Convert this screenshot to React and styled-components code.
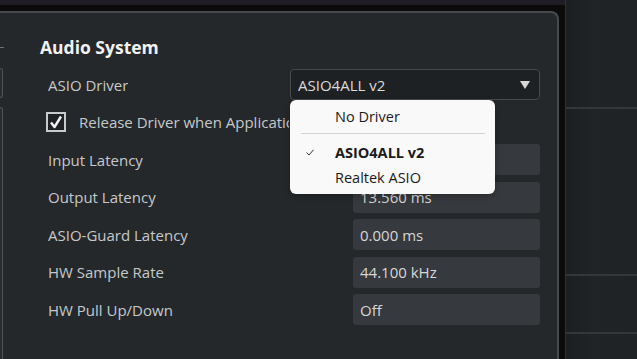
import React from 'react';
import styled, { createGlobalStyle } from 'styled-components';

const Global = createGlobalStyle`
  html, body { margin: 0; padding: 0; background: #0b0b0c; }
  body { width: 637px; height: 359px; overflow: hidden; font-family: "Open Sans", "Noto Sans", sans-serif; }
  * { box-sizing: border-box; }
`;

const Screen = styled.div`
  display: flex;
  width: 637px;
  height: 359px;
  overflow: hidden;
  background: #0b0b0c;
`;

const MainColumn = styled.div`
  width: 565px;
  flex: none;
  display: flex;
  flex-direction: column;
`;

const TitleStrip = styled.div`
  height: 5px;
  flex: none;
  background: #201c25;
`;

const Spacer = styled.div`
  height: 6px;
  flex: none;
`;

const Panel = styled.div`
  flex: 1;
  min-height: 0;
  margin-right: 6px;
  display: flex;
  background: #25282b;
  border-top: 2px solid #46494d;
  border-right: 2px solid #46494d;
  border-top-right-radius: 8px;
`;

const LeftStub = styled.div`
  width: 4px;
  flex: none;
  display: flex;
  flex-direction: column;
`;

const StubDash = styled.div`
  margin-top: 34px;
  height: 1px;
  width: 4px;
  background: #6e7174;
`;

const StubBox = styled.div`
  width: 3px;
  margin-top: ${p => p.$top}px;
  height: ${p => (p.$grow ? 'auto' : `${p.$h}px`)};
  flex: ${p => (p.$grow ? 1 : 'none')};
  background: #292c2f;
  border: 1px solid #505357;
  border-left: none;
  border-bottom: ${p => (p.$grow ? 'none' : '1px solid #505357')};
  border-radius: ${p => (p.$grow ? '0 3px 0 0' : '0 3px 3px 0')};
`;

const Content = styled.div`
  flex: 1;
  padding: 24px 0 0 36px;
`;

const Heading = styled.h2`
  margin: 0 0 12px;
  font-size: 17.5px;
  line-height: 20px;
  font-weight: 700;
  color: #f1f1f1;
`;

const Rows = styled.div`
  width: 492px;
  margin-left: 8px;
  display: flex;
  flex-direction: column;
  gap: 6.5px;
`;

const Row = styled.div`
  height: 31px;
  display: flex;
  align-items: center;
  justify-content: ${p => (p.$start ? 'flex-start' : 'space-between')};
`;

const Label = styled.span`
  font-size: 15px;
  color: #c6c8ca;
  white-space: nowrap;
  overflow: hidden;
  max-width: ${p => (p.$clip ? `${p.$clip}px` : 'none')};
`;

const ValueField = styled.div`
  width: 187px;
  height: 31px;
  flex: none;
  display: flex;
  align-items: center;
  padding-left: 7px;
  background: #36393d;
  border-radius: 3px;
  font-size: 15px;
  color: #d6d6d6;
`;

const Select = styled.div`
  position: relative;
  width: 250px;
  height: 31px;
  flex: none;
  display: flex;
  align-items: center;
  justify-content: space-between;
  padding: 0 9px 0 7px;
  background: #1e2124;
  border: 1px solid #47494d;
  border-radius: 4px;
  font-size: 15px;
  color: #dadada;
`;

const Arrow = styled.span`
  width: 0;
  height: 0;
  border-left: 5px solid transparent;
  border-right: 5px solid transparent;
  border-top: 8px solid #d8d8d8;
`;

const CheckBox = styled.span`
  width: 20px;
  height: 20px;
  flex: none;
  margin-left: -2px;
  margin-right: 13px;
  border: 2px solid #c9cacc;
  background: #1f2225;
  display: flex;
  align-items: center;
  justify-content: center;
`;

const Menu = styled.div`
  position: absolute;
  z-index: 5;
  top: calc(100% + 1px);
  left: -1px;
  width: 205px;
  padding: 4px 0;
  background: #f9f9f9;
  border-radius: 6px;
  box-shadow: 0 2px 6px rgba(0, 0, 0, 0.25);
`;

const MenuItem = styled.div`
  height: 25px;
  display: flex;
  align-items: center;
  padding-left: 45px;
  position: relative;
  font-size: 14.5px;
  font-weight: ${p => (p.$selected ? 700 : 400)};
  color: #1b1b1b;
  white-space: nowrap;
`;

const MenuCheck = styled.svg`
  position: absolute;
  left: 16px;
  top: 9px;
`;

const MenuSeparator = styled.div`
  height: 1px;
  margin: 4px 10px 6px 11px;
  background: #d3d3d3;
`;

const SidePanel = styled.div`
  flex: 1;
  display: flex;
  flex-direction: column;
  background: linear-gradient(90deg, #1c1f22 0%, #212427 40%, #202326 100%);
  border-left: 1px solid #2e3134;
`;

const SideSection = styled.div`
  height: ${p => (p.$h ? `${p.$h}px` : 'auto')};
  flex: ${p => (p.$h ? 'none' : 1)};
  border-bottom: ${p => (p.$h ? '2px solid #34373a' : 'none')};
`;

const fields = [
  ['Input Latency', ''],
  ['Output Latency', '13.560 ms'],
  ['ASIO-Guard Latency', '0.000 ms'],
  ['HW Sample Rate', '44.100 kHz'],
  ['HW Pull Up/Down', 'Off'],
];

export default function App() {
  return (
    <>
      <Global />
      <Screen>
        <MainColumn>
          <TitleStrip />
          <Spacer />
          <Panel>
            <LeftStub>
              <StubDash />
              <StubBox $top={20} $h={30} />
              <StubBox $top={9} $grow />
            </LeftStub>
            <Content>
              <Heading>Audio System</Heading>
              <Rows>
                <Row>
                  <Label>ASIO Driver</Label>
                  <Select>
                    <span>ASIO4ALL v2</span>
                    <Arrow />
                    <Menu>
                      <MenuItem>No Driver</MenuItem>
                      <MenuSeparator />
                      <MenuItem $selected>
                        <MenuCheck width="8" height="7" viewBox="0 0 8 7">
                          <polyline points="0.5,3.5 3,6 7.5,0.8" fill="none" stroke="#333" strokeWidth="1" />
                        </MenuCheck>
                        ASIO4ALL v2
                      </MenuItem>
                      <MenuItem>Realtek ASIO</MenuItem>
                    </Menu>
                  </Select>
                </Row>
                <Row $start>
                  <CheckBox>
                    <svg width="14" height="14" viewBox="0 0 14 14">
                      <polyline points="2,7.5 5.5,12 12,1.5" fill="none" stroke="#f2f2f2" strokeWidth="2.4" strokeLinejoin="round" />
                    </svg>
                  </CheckBox>
                  <Label $clip={210}>Release Driver when Application is in Background</Label>
                </Row>
                {fields.map(([label, value]) => (
                  <Row key={label}>
                    <Label>{label}</Label>
                    <ValueField>{value}</ValueField>
                  </Row>
                ))}
              </Rows>
            </Content>
          </Panel>
        </MainColumn>
        <SidePanel>
          <SideSection $h={109} />
          <SideSection $h={167} />
          <SideSection $h={58} />
          <SideSection />
        </SidePanel>
      </Screen>
    </>
  );
}
